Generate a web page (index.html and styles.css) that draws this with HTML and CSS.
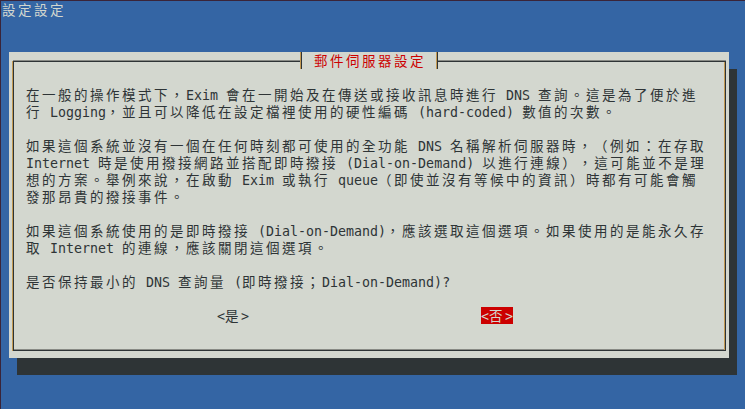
FILE: index.html
```html
<!DOCTYPE html>
<html lang="zh-Hant">
<head>
<meta charset="utf-8">
<title>設定設定</title>
<link rel="stylesheet" href="styles.css">
</head>
<body>
<div class="screen">
  <div class="topbar"><span class="c">設定設定</span></div>
  <div class="dialog">
    <div class="frame">
      <div class="title"><span class="c">郵件伺服器設定</span></div>
      <div class="row"><span class="c">在一般的操作模式下，</span>Exim <span class="c">會在一開始及在傳送或接收訊息時進行</span> DNS <span class="c">查詢。這是為了便於進</span></div>
      <div class="row"><span class="c">行</span> Logging<span class="c">，並且可以降低在設定檔裡使用的硬性編碼</span> (hard-coded) <span class="c">數值的次數。</span></div>
      <div class="row"></div>
      <div class="row"><span class="c">如果這個系統並沒有一個在任何時刻都可使用的全功能</span> DNS <span class="c">名稱解析伺服器時，（例如：在存取</span></div>
      <div class="row">Internet <span class="c">時是使用撥接網路並搭配即時撥接</span> (Dial-on-Demand) <span class="c">以進行連線），這可能並不是理</span></div>
      <div class="row"><span class="c">想的方案。舉例來說，在啟動</span> Exim <span class="c">或執行</span> queue<span class="c">（即使並沒有等候中的資訊）時都有可能會觸</span></div>
      <div class="row"><span class="c">發那昂貴的撥接事件。</span></div>
      <div class="row"></div>
      <div class="row"><span class="c">如果這個系統使用的是即時撥接</span> (Dial-on-Demand)<span class="c">，應該選取這個選項。如果使用的是能永久存</span></div>
      <div class="row"><span class="c">取</span> Internet <span class="c">的連線，應該關閉這個選項。</span></div>
      <div class="row"></div>
      <div class="row"><span class="c">是否保持最小的</span> DNS <span class="c">查詢量</span> (<span class="c">即時撥接；</span>Dial-on-Demand)?</div>
      <div class="row"></div>
      <div class="buttons">
        <div class="btn">&lt;<span class="c">是</span>&gt;</div>
        <div class="btn btn-active">&lt;<span class="c">否</span>&gt;</div>
      </div>
    </div>
  </div>
</div>
</body>
</html>
```
FILE: styles.css
```css
html, body {
  margin: 0;
  padding: 0;
  background: #3465a4;
}

.screen {
  width: 744px;
  height: 408px;
  border-top: 1px solid #3a2438;
  border-left: 1px solid #3a2438;
  background: #3465a4;
  font-family: "DejaVu Sans Mono", "Noto Sans CJK SC", monospace;
  font-size: 13.3px;
  line-height: 17px;
  overflow: hidden;
  text-spacing-trim: space-all;
  text-autospace: no-autospace;
}

.c {
  font-family: "Noto Sans CJK SC", "Noto Sans CJK TC", sans-serif;
  font-size: 13.5px;
  letter-spacing: 2.5px;
  text-spacing-trim: space-all;
}

.topbar {
  height: 17px;
  color: #d3d7cf;
  white-space: pre;
  padding-left: 1px;
}

.dialog {
  margin: 34px 0 0 8px;
  width: 720px;
  height: 306px;
  box-sizing: border-box;
  padding: 9px 3px 7px 4px;
  background: #d3d7cf;
  box-shadow: 8px 17px 0 #2e3436;
  display: flex;
  flex-direction: column;
  color: #2e3436;
}

.frame {
  flex: 1;
  position: relative;
  border: 1px solid #2e3436;
  padding: 24px 0 0 12px;
  box-shadow: -1px 0 0 #c49a52, inset -1px 0 0 #c49a52, 0 -1px 0 #888a85, inset 0 -1px 0 #888a85;
}

.title {
  position: absolute;
  top: -10px;
  left: 287px;
  width: 137px;
  height: 17px;
  box-sizing: border-box;
  border-left: 1px solid #2e3436;
  border-right: 1px solid #2e3436;
  box-shadow: -1px 0 0 #c49a52, inset -1px 0 0 #c49a52;
  background: #d3d7cf;
  padding-left: 12px;
  color: #cc0000;
  white-space: pre;
}

.row {
  height: 17px;
  white-space: pre;
}

.buttons {
  display: flex;
  gap: 232px;
  padding-left: 191px;
  height: 17px;
}

.btn {
  width: 32px;
  height: 17px;
  white-space: pre;
  color: #2e3436;
}

.btn-active {
  background: #cc0000;
  color: #d3d7cf;
}
```
